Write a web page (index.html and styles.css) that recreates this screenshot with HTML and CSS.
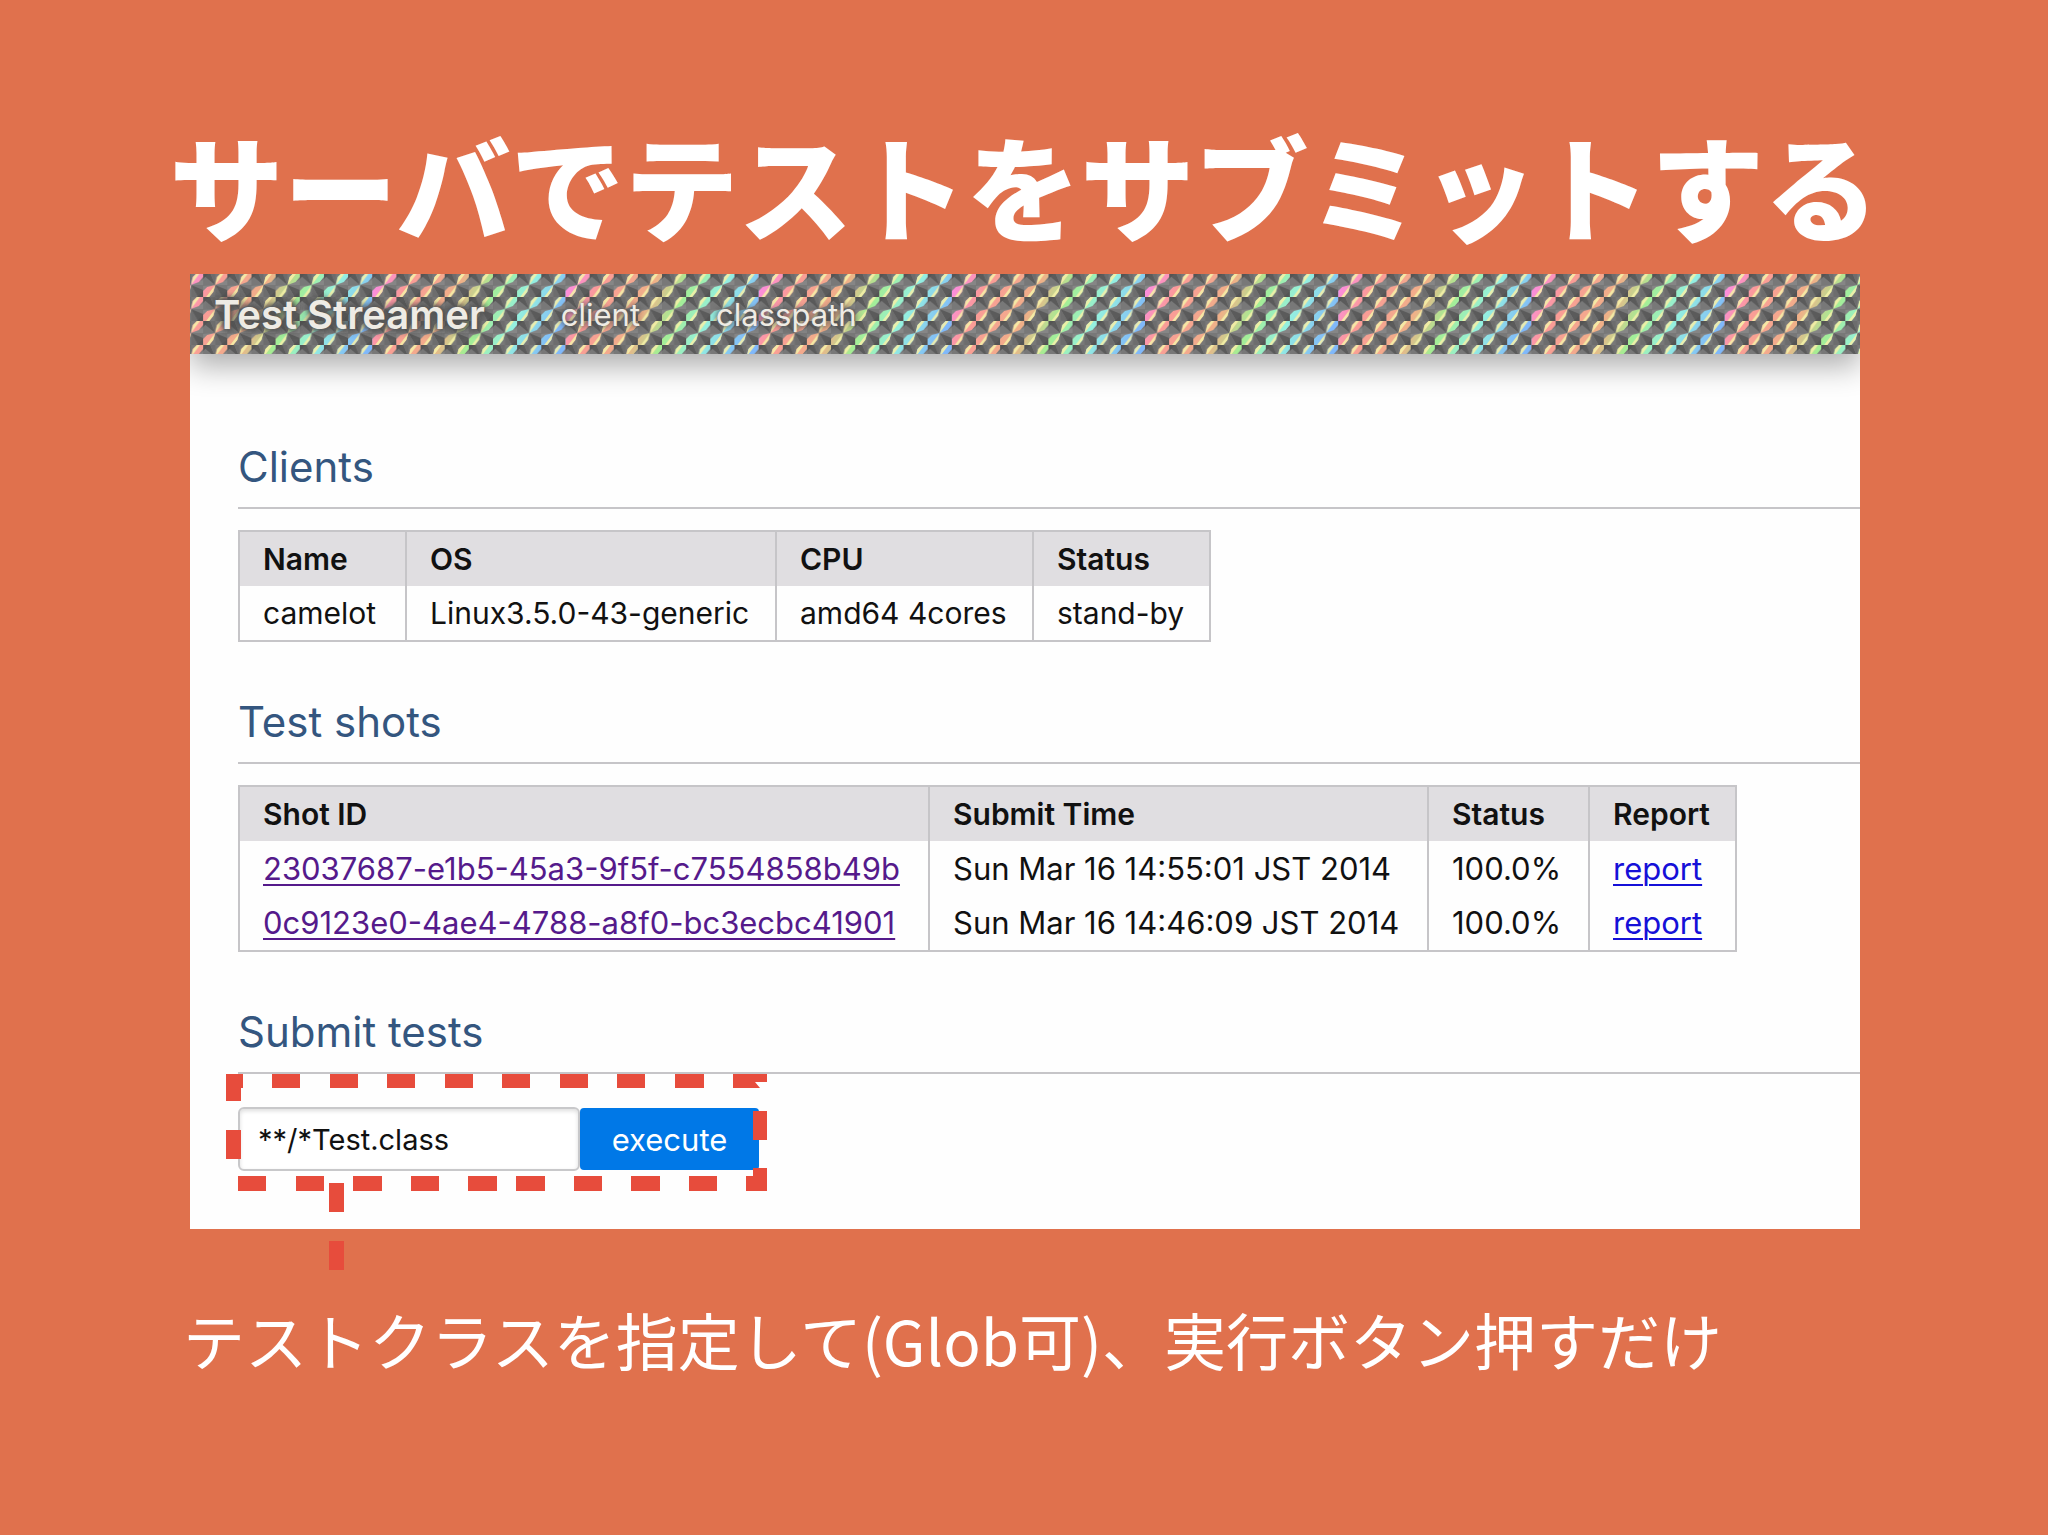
FILE: index.html
```
<!DOCTYPE html>
<html lang="ja">

<head>
    <meta charset="UTF-8">
    <meta name="viewport" content="width=device-width, initial-scale=1.0">
    <title>サーバでテストをサブミットする</title>
    <link rel="stylesheet" href="styles.css">
</head>

<body>

    <h1 class="slide-title">サーバでテストをサブミットする</h1>

    <main class="panel">
        <header class="navbar">
            <svg class="hologram" aria-hidden="true">
                <defs>
                    <linearGradient id="rainbow" gradientUnits="userSpaceOnUse" x1="0" y1="0" x2="178" y2="75">
                        <stop offset="0" stop-color="#fb8af0" />
                        <stop offset="0.18" stop-color="#fb9a98" />
                        <stop offset="0.44" stop-color="#f0b088" />
                        <stop offset="0.6" stop-color="#a4ee94" />
                        <stop offset="0.78" stop-color="#94f0e0" />
                        <stop offset="1" stop-color="#80b8fa" />
                    </linearGradient>
                    <pattern id="rainbow-band" patternUnits="userSpaceOnUse" x="-11" y="0" width="193.2" height="80">
                        <rect width="193.2" height="80" fill="url(#rainbow)" />
                    </pattern>
                    <pattern id="metal" patternUnits="userSpaceOnUse" x="-11" y="-1" width="24.15" height="24">
                        <rect width="25" height="24" fill="#787878" />
                        <path d="M12 12 L0 2 L0 0 L7 0 Z M12 12 L24.15 17 L24.15 24 L19 24 Z" fill="#5b5b5b" />
                        <path d="M12 12 L7 0 L12 0 Z M12 12 L12 24 L19 24 Z" fill="#6d6d6d" />
                        <path d="M0 0 L6 0 L0 6 Z M24.15 24 L18 24 L24.15 18 Z" fill="#545454" />
                        <path d="M12 12 L0 13 L0 18 Z M12 12 L24.15 7 L24.15 12 Z" fill="#868686" />
                    </pattern>
                    <pattern id="kites" patternUnits="userSpaceOnUse" x="-11" y="-1" width="24.15" height="24">
                        <path d="M12 12 L14 4 L18 0 L24.15 0 L24.15 4 L20 9 Z M12 12 L4 14 L0 18 L0 24 L6 24 L10 19 Z" fill="#fff" />
                    </pattern>
                    <pattern id="glints" patternUnits="userSpaceOnUse" x="-11" y="-1" width="24.15" height="24">
                        <path d="M12 12 L14 4 L18 0 L21 0 Z M12 12 L3 24 L6 24 L10 19 Z" fill="#f6f0a8" fill-opacity="0.9" />
                    </pattern>
                    <mask id="kite-mask">
                        <rect width="100%" height="100%" fill="url(#kites)" />
                    </mask>
                </defs>
                <rect width="100%" height="100%" fill="url(#metal)" />
                <rect width="100%" height="100%" fill="url(#rainbow-band)" mask="url(#kite-mask)" />
                <rect width="100%" height="100%" fill="url(#glints)" />
            </svg>
            <a class="brand" href="#">Test Streamer</a>
            <nav class="menu">
                <a href="#clients">client</a>
                <a href="#shots">classpath</a>
            </nav>
        </header>

        <div class="content">
            <section class="block" id="clients">
                <h2>Clients</h2>
                <table class="clients">
                    <thead>
                        <tr>
                            <th class="col-name">Name</th>
                            <th class="col-os">OS</th>
                            <th class="col-cpu">CPU</th>
                            <th class="col-state">Status</th>
                        </tr>
                    </thead>
                    <tbody>
                        <tr>
                            <td>camelot</td>
                            <td>Linux3.5.0-43-generic</td>
                            <td>amd64 4cores</td>
                            <td>stand-by</td>
                        </tr>
                    </tbody>
                </table>
            </section>

            <section class="block" id="shots">
                <h2>Test shots</h2>
                <table class="shots">
                    <thead>
                        <tr>
                            <th class="col-shot">Shot ID</th>
                            <th class="col-time">Submit Time</th>
                            <th class="col-percent">Status</th>
                            <th class="col-report">Report</th>
                        </tr>
                    </thead>
                    <tbody>
                        <tr>
                            <td><a class="visited" href="#">23037687-e1b5-45a3-9f5f-c7554858b49b</a></td>
                            <td>Sun Mar 16 14:55:01 JST 2014</td>
                            <td>100.0%</td>
                            <td><a href="#">report</a></td>
                        </tr>
                        <tr>
                            <td><a class="visited" href="#">0c9123e0-4ae4-4788-a8f0-bc3ecbc41901</a></td>
                            <td>Sun Mar 16 14:46:09 JST 2014</td>
                            <td>100.0%</td>
                            <td><a href="#">report</a></td>
                        </tr>
                    </tbody>
                </table>
            </section>

            <section class="block" id="submit">
                <h2>Submit tests</h2>
                <form class="submit-form">
                    <input type="text" aria-label="Test classes" value="**/*Test.class">
                    <button type="button">execute</button>
                    <svg class="marker" width="541" height="197" viewBox="0 0 541 197" fill="#e74c3c" aria-hidden="true">
                        <!-- top -->
                        <path d="M0 0h17v14h-2v13H0z" />
                        <path d="M46 0h28v14H46z M104 0h28v14h-28z M161 0h28v14h-28z M219 0h28v14h-28z M276 0h28v14h-28z M334 0h28v14h-28z M391 0h28v14h-28z M449 0h29v14h-29z" />
                        <path d="M507 0h34v8h-12l5 6h-27z" />
                        <!-- sides -->
                        <path d="M0 56h15v29H0z M527 37h14v29h-14z" />
                        <!-- bottom -->
                        <path d="M12 102h28v15H12z M70 102h28v15H70z M127 102h29v15h-29z M185 102h28v15h-28z M242 102h29v15h-29z M290 102h29v15h-29z M348 102h28v15h-28z M405 102h29v15h-29z M463 102h28v15h-28z" />
                        <path d="M520 102h7v-8h14v23h-21z" />
                        <!-- leader to the caption -->
                        <path d="M103 109h15v29h-15z M103 167h15v29h-15z" />
                    </svg>
                </form>
            </section>
        </div>
    </main>

    <p class="caption">テストクラスを指定して(Glob可)、実行ボタン押すだけ</p>

</body>

</html>
```

FILE: styles.css
```
* {
    box-sizing: border-box;
}

body {
    margin: 0;
    padding-top: 119px;
    min-height: 100vh;
    background-color: #e0714d;
    font-family: Inter, "Noto Sans CJK JP", sans-serif;
    font-size: 30px;
    color: #111;
}

.slide-title {
    margin: 0 0 25px;
    font-family: "Noto Sans CJK JP", sans-serif;
    font-size: 114px;
    font-weight: 900;
    line-height: 130px;
    text-align: center;
    white-space: nowrap;
    color: #fff;
}

.panel {
    margin: 0 188px 0 190px;
    background-color: #fefefe;
}

.navbar {
    position: relative;
    display: flex;
    align-items: center;
    gap: 76px;
    height: 80px;
    padding-left: 24px;
    box-shadow: 0 12px 30px rgba(0, 0, 0, 0.32);
    clip-path: inset(0 0 -60px 0);
}

.hologram {
    position: absolute;
    top: 0;
    left: 0;
    width: 100%;
    height: 100%;
}

.navbar a {
    position: relative;
    color: #eeebe4;
    text-decoration: none;
    text-shadow: 0 0 4px #555, 0 0 8px #555;
}

.navbar .brand {
    font-size: 40px;
    font-weight: 600;
    text-shadow: 0 0 4px #555, 0 0 6px #555, 0 0 8px #555, 0 0 8px #555;
}

.menu {
    display: flex;
    gap: 76px;
    font-size: 31px;
}

.content {
    padding: 89px 0 58px 48px;
}

.block + .block {
    margin-top: 56px;
}

h2 {
    margin: 0 0 21px;
    padding-bottom: 16px;
    border-bottom: 2px solid #c6c5c8;
    font-size: 42px;
    font-weight: 400;
    line-height: 48px;
    color: #34567f;
}

table {
    border: 2px solid #c6c5c8;
    border-collapse: collapse;
}

th,
td {
    height: 55px;
    padding: 0 23px;
    border-left: 2px solid #c6c5c8;
    line-height: 40px;
    text-align: left;
    white-space: nowrap;
}

th {
    background-color: #e0dee1;
    font-weight: 600;
}

.shots td {
    font-size: 31px;
}

.col-name {
    width: 167px;
}

.col-os {
    width: 370px;
}

.col-cpu {
    width: 257px;
}

.col-state {
    width: 177px;
}

.col-shot {
    width: 690px;
}

.col-time {
    width: 499px;
}

.col-percent {
    width: 161px;
}

.col-report {
    width: 147px;
}

td a {
    color: #1510d8;
    text-decoration-thickness: 2px;
    text-underline-offset: 4px;
}

td a.visited {
    color: #551a8b;
}

.submit-form {
    position: relative;
    display: flex;
    align-items: center;
    margin-top: 33px;
}

.submit-form input {
    width: 342px;
    height: 64px;
    padding: 0 18px;
    border: 2px solid #c8c8ca;
    border-radius: 6px;
    background-color: #fff;
    box-shadow: inset 0 2px 4px #ddd;
    font: inherit;
    font-size: 29px;
    color: inherit;
}

.submit-form button {
    width: 179px;
    height: 62px;
    padding: 0;
    border: 0;
    border-radius: 4px;
    background-color: #0078e7;
    font: inherit;
    font-size: 31px;
    color: #fff;
}

.marker {
    position: absolute;
    top: -33px;
    left: -12px;
    pointer-events: none;
}

.caption {
    margin: 70px 0 0 183px;
    font-family: "Noto Sans CJK JP", sans-serif;
    font-size: 62px;
    font-weight: 400;
    line-height: 80px;
    color: #fff;
}
```
